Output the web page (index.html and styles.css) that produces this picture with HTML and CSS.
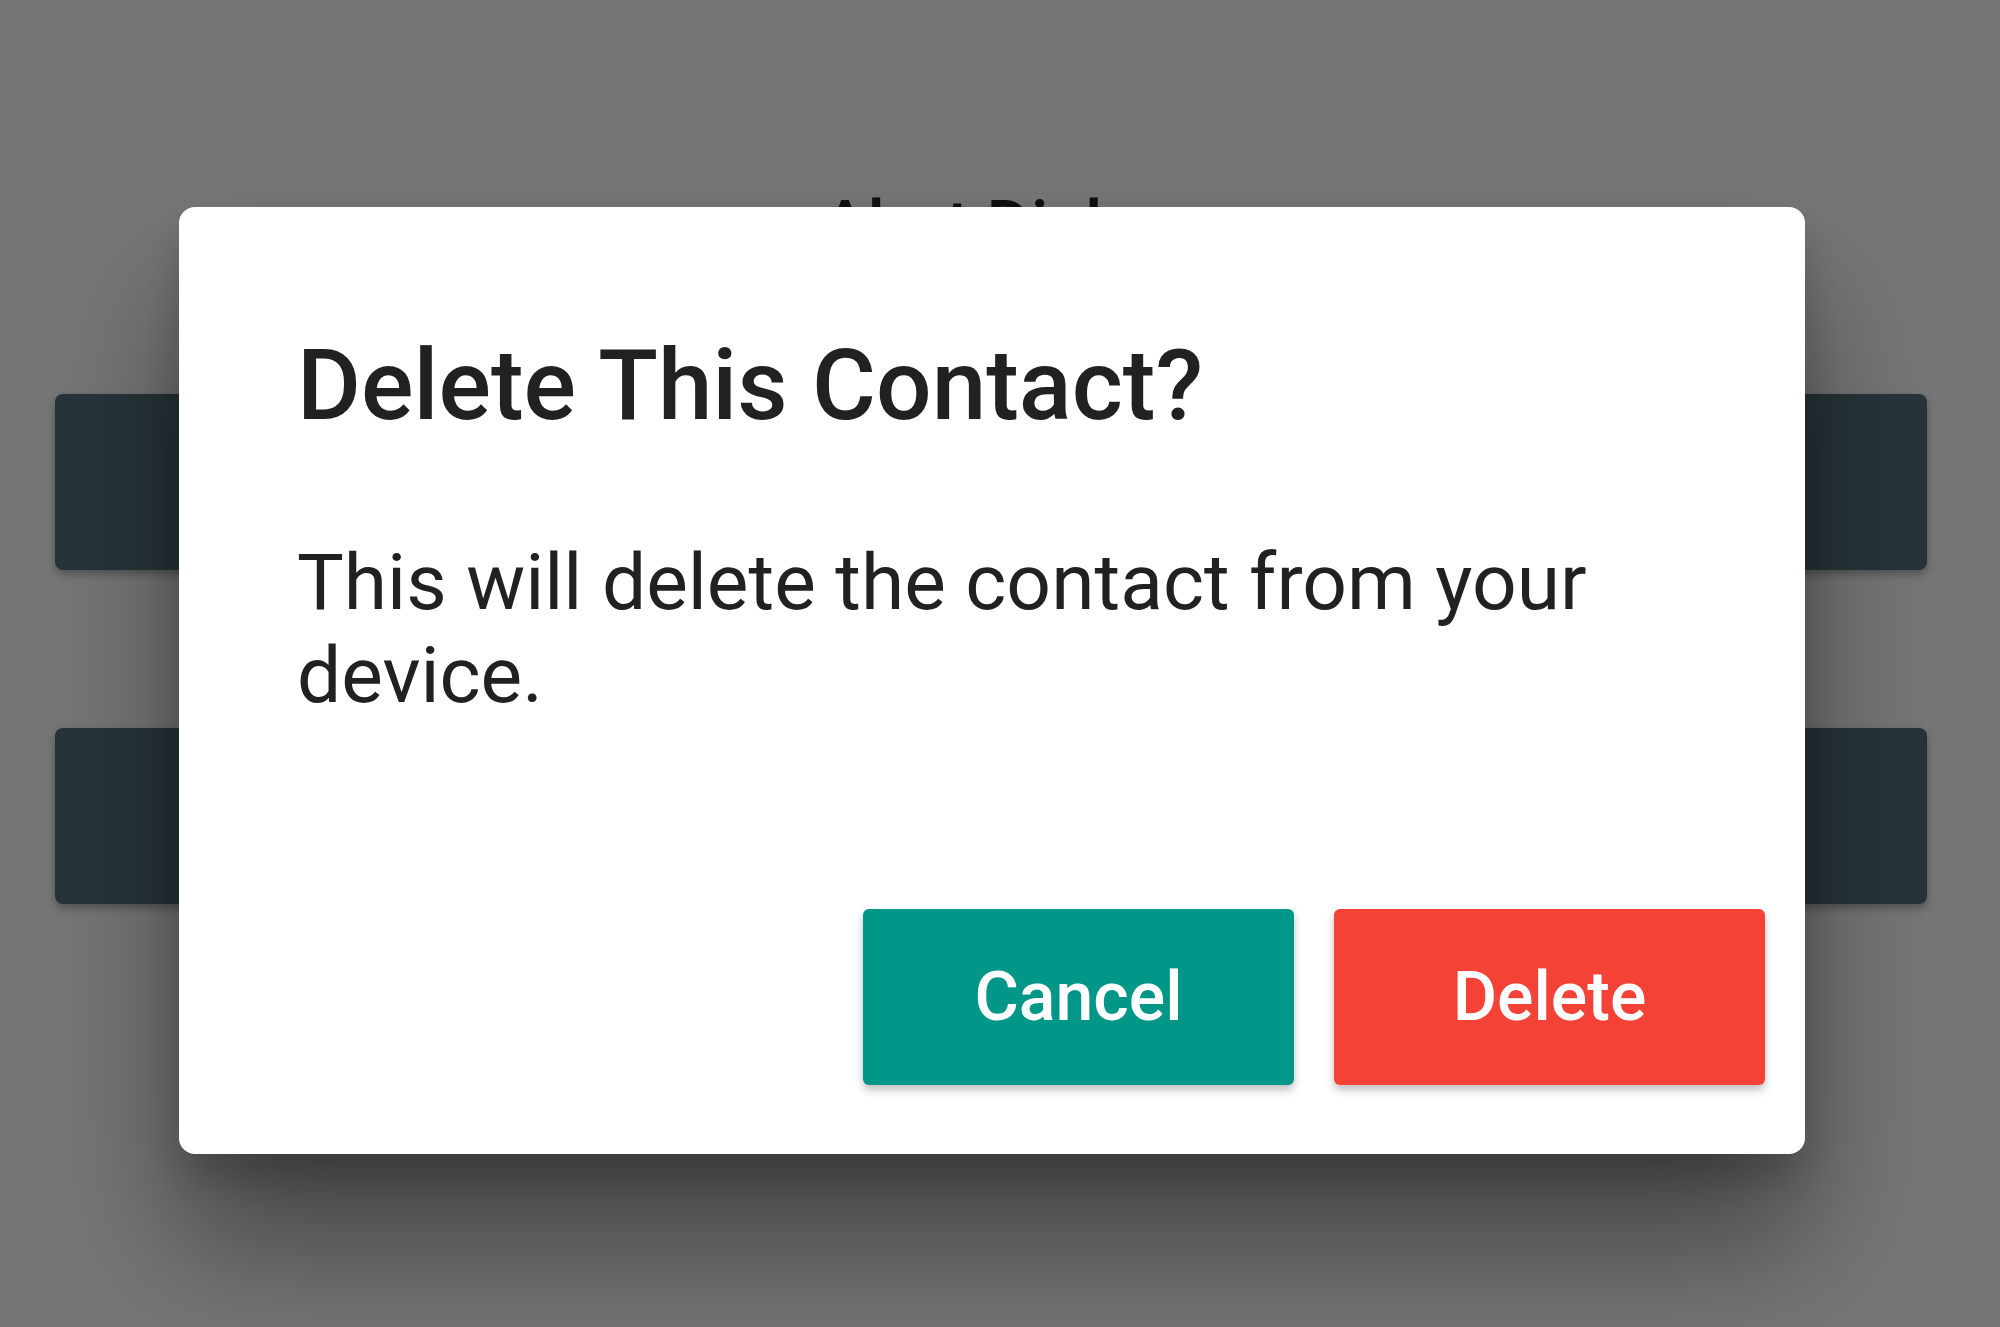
FILE: index.html
```html
<!DOCTYPE html>
<html>
<head>
    <meta name="viewport" content="width=device-width, initial-scale=1.0">
    <title>Alert Dialog</title>
    <link rel="stylesheet" href="styles.css">
</head>
<body>
    <div class="screen">
        <h1 class="screen-title">Alert Dialog</h1>
        <div class="bar"></div>
        <div class="bar"></div>
    </div>

    <div class="scrim">
        <div class="dialog">
            <h2 class="dialog-title">Delete This Contact?</h2>
            <p class="dialog-text">This will delete the contact from your device.</p>
            <div class="dialog-actions">
                <button class="btn btn-cancel">Cancel</button>
                <button class="btn btn-delete">Delete</button>
            </div>
        </div>
    </div>
</body>
</html>
```

FILE: styles.css
```css
body {
    font-family: Roboto, "Noto Sans", sans-serif;
    background-color: #f8f8f8;
    margin: 0;
    height: 100vh;
    overflow: hidden;
}

.screen {
    display: flex;
    flex-direction: column;
    padding: 0 73px 0 55px;
}

.screen-title {
    margin: 0;
    padding-top: 186px;
    font-size: 68px;
    line-height: 80px;
    font-weight: 500;
    color: #212121;
    text-align: center;
    padding-left: 20px;
}

.bar {
    height: 176px;
    background-color: #546e7a;
    border-radius: 8px;
    box-shadow: 0 4px 8px rgba(0, 0, 0, 0.3);
    margin-top: 128px;
}

.bar + .bar {
    margin-top: 158px;
}

/* dim layer over the screen, holds the dialog */
.scrim {
    position: fixed;
    top: 0;
    right: 0;
    bottom: 0;
    left: 0;
    background-color: rgba(0, 0, 0, 0.53);
    display: flex;
    align-items: flex-start;
    padding: 207px 0 0 179px;
}

.dialog {
    width: 1626px;
    box-sizing: border-box;
    background-color: #fff;
    border-radius: 16px;
    padding: 122px 40px 69px 118px;
    box-shadow: 0 90px 130px rgba(0, 0, 0, 0.42), 0 24px 40px rgba(0, 0, 0, 0.18);
    color: #212121;
}

.dialog-title {
    margin: 0;
    font-size: 98px;
    line-height: 114px;
    font-weight: 500;
}

.dialog-text {
    margin: 93px 0 0 0;
    font-size: 78.5px;
    line-height: 93px;
    font-weight: 400;
    max-width: 1400px;
}

.dialog-actions {
    display: flex;
    justify-content: flex-end;
    gap: 40px;
    margin-top: 187px;
}

.btn {
    width: 431px;
    height: 176px;
    border: none;
    border-radius: 6px;
    font-family: Roboto, "Noto Sans", sans-serif;
    font-size: 68px;
    font-weight: 500;
    color: #fff;
    box-shadow: 0 5px 9px rgba(0, 0, 0, 0.25);
    cursor: pointer;
}

.btn-cancel {
    background-color: #009688;
}

.btn-delete {
    background-color: #f44336;
}
```
